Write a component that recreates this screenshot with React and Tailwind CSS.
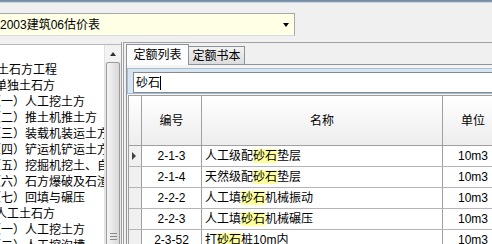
const TREE = [
	{ t: '土石方工程', ml: '-ml-[3px]' },
	{ t: '单独土石方', ml: '-ml-[5px]' },
	{ t: '（一）人工挖土方', ml: '-ml-[11px]' },
	{ t: '（二）推土机推土方', ml: '-ml-[11px]' },
	{ t: '（三）装载机装运土方', ml: '-ml-[11px]' },
	{ t: '（四）铲运机铲运土方', ml: '-ml-[11px]' },
	{ t: '（五）挖掘机挖土、自卸汽车运土', ml: '-ml-[11px]' },
	{ t: '（六）石方爆破及石渣运输', ml: '-ml-[11px]' },
	{ t: '（七）回填与碾压', ml: '-ml-[11px]' },
	{ t: '人工土石方', ml: '-ml-[5px]' },
	{ t: '（一）人工挖土方', ml: '-ml-[11px]' },
	{ t: '（二）人工挖沟槽', ml: '-ml-[11px]' },
];

const ROWS = [
	{ code: '2-1-3', pre: '人工级配', post: '垫层' },
	{ code: '2-1-4', pre: '天然级配', post: '垫层' },
	{ code: '2-2-2', pre: '人工填', post: '机械振动' },
	{ code: '2-2-3', pre: '人工填', post: '机械碾压' },
	{ code: '2-3-52', pre: '打', post: '桩10m内' },
];

function Scrollbar() {
	return (
		<div className="w-[17px] shrink-0 flex flex-col bg-[#e9e9e9] border-l border-[#e2e2e2]">
			<div className="h-[17px] shrink-0 flex items-center justify-center bg-[#f2f2f2]">
				<div className="w-0 h-0 border-l-[3.5px] border-r-[3.5px] border-b-[4px] border-l-transparent border-r-transparent border-b-[#303030]" />
			</div>
			<div className="mx-[1px] h-[360px] shrink-0 rounded-[2px] border border-[#9b9b9b] bg-gradient-to-r from-[#f5f5f5] to-[#d9d9d9] flex flex-col items-center pt-[170px] gap-[2px]">
				<div className="w-[7px] h-px bg-[#8a8a8a]" />
				<div className="w-[7px] h-px bg-[#8a8a8a]" />
				<div className="w-[7px] h-px bg-[#8a8a8a]" />
			</div>
		</div>
	);
}

export default function App() {
	return (
		<div className="w-[492px] h-[244px] overflow-hidden bg-[#f0f0f0] flex flex-col font-['Liberation_Sans','Noto_Sans_CJK_SC',sans-serif] text-[12px] text-black">
			<div className="h-[3px] shrink-0 bg-[linear-gradient(to_bottom,#6f869f,#8aa0b7_66%,#c8d4e1_66%)]" />

			<div className="h-[39px] shrink-0 pt-[10px]">
				<div className="-ml-[2px] w-[297px] h-[23px] border border-[#a3a9b1] border-b-[#d6d9dd] bg-[#ffffe6] flex items-center">
					<span className="flex-1 pl-[1px] leading-[16px] whitespace-nowrap">2003建筑06估价表</span>
					<div className="w-[17px] h-full flex items-center justify-center">
						<div className="w-0 h-0 border-l-[3.5px] border-r-[3.5px] border-t-[4px] border-l-transparent border-r-transparent border-t-black" />
					</div>
				</div>
			</div>

			<div className="flex-1 flex min-h-0">
				{/* tree */}
				<div className="w-[121px] shrink-0 mt-[2px] border-t border-[#b8b8b8] flex min-h-0">
					<div className="w-[104px] shrink-0 bg-white overflow-hidden pt-[17px]">
						{TREE.map((n, i) => (
							<div key={i} className={`${n.ml} h-[16px] leading-[16px] whitespace-nowrap`}>
								{n.t}
							</div>
						))}
					</div>
					<Scrollbar />
				</div>

				{/* splitter */}
				<div className="w-[2px] shrink-0 border-l border-[#a0a0a0] bg-[#f7f7f7]" />

				{/* right panel */}
				<div className="flex-1 min-w-0 border-l border-t border-[#a0a0a0] pl-[2px] flex flex-col">
					<div className="h-[22px] shrink-0 flex items-end border-b border-[#8e9299]">
						<div className="relative z-10 -mb-px w-[63px] h-[21px] border border-b-0 border-[#8e9299] bg-[#fcfcfc] flex items-center justify-center leading-[16px]">
							定额列表
						</div>
						<div className="-ml-px w-[57px] h-[18px] border border-b-0 border-[#8e9299] bg-gradient-to-b from-[#f2f2f2] to-[#dcdcdc] flex items-center justify-center leading-[16px]">
							定额书本
						</div>
					</div>

					<div className="flex-1 min-h-0 border-l border-[#8e9299] bg-[#f4f4f4] flex flex-col">
						<div className="mt-[3px] border border-r-0 border-[#a9bdd0] bg-[#d7e5f1] pt-[3px] pl-[5px]">
							<div className="h-[21px] border-t border-l border-b border-[#848a93] bg-white flex items-center pl-[2px]">
								<span className="leading-[16px]">砂石</span>
								<span className="w-px h-[14px] bg-black" />
							</div>
						</div>

						<div className="mt-[1px] ml-[1px] w-[420px] border-l border-t border-[#a0a0a0] flex flex-col">
							<div className="h-[50px] shrink-0 flex border-b border-[#a0a0a0] bg-gradient-to-b from-white to-[#ededed]">
								<div className="w-[13px] shrink-0 border-r border-[#a0a0a0]" />
								<div className="w-[60px] shrink-0 border-r border-[#a0a0a0] flex items-center justify-center">编号</div>
								<div className="w-[241px] shrink-0 border-r border-[#a0a0a0] flex items-center justify-center">名称</div>
								<div className="w-[60px] shrink-0 flex items-center justify-center">单位</div>
							</div>
							{ROWS.map((r, i) => (
								<div key={r.code} className="h-[21px] shrink-0 flex border-b border-[#b4b4b4] bg-white">
									<div className="w-[13px] shrink-0 border-r border-[#a0a0a0] bg-[#f0f0f0] flex items-center pl-[3px]">
										{i === 0 && (
											<div className="w-0 h-0 border-t-[4px] border-b-[4px] border-l-[4px] border-t-transparent border-b-transparent border-l-[#404040]" />
										)}
									</div>
									<div className="w-[60px] shrink-0 border-r border-[#a0a0a0] flex items-center justify-center">
										{r.code}
									</div>
									<div className="w-[241px] shrink-0 border-r border-[#a0a0a0] flex items-center pl-[3px] whitespace-nowrap">
										<span>{r.pre}</span>
										<span className="bg-[#ffff9c] leading-[14px]">砂石</span>
										<span>{r.post}</span>
									</div>
									<div className="w-[60px] shrink-0 flex items-center justify-center">10m3</div>
								</div>
							))}
						</div>
					</div>
				</div>
			</div>
		</div>
	);
}
